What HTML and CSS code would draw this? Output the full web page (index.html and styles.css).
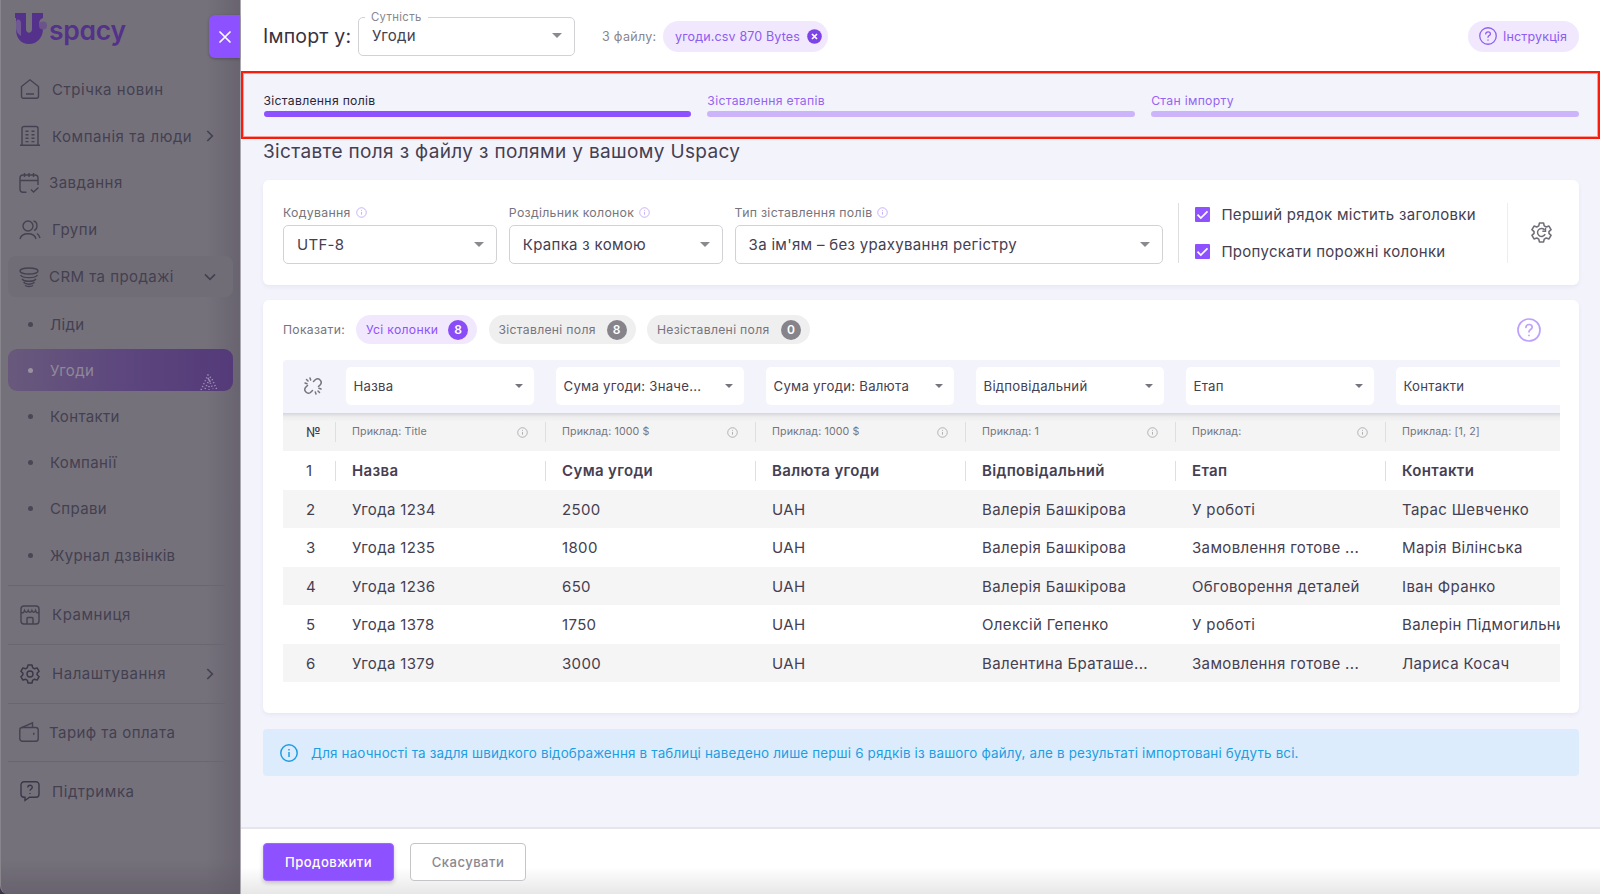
FILE: index.html
```html
<!DOCTYPE html>
<html lang="uk">
<head>
<meta charset="utf-8">
<title>Uspacy – Імпорт</title>
<link rel="stylesheet" href="styles.css">
</head>
<body>
<svg class="defs" width="0" height="0">
  <symbol id="info" viewBox="0 0 12 12"><circle cx="6" cy="6" r="5.2" fill="none" stroke="currentColor" stroke-width=".9"/><path d="M6 5.4v3M6 3.2v1" stroke="currentColor" stroke-width=".9"/></symbol>
  <symbol id="help" viewBox="0 0 24 24" fill="none" stroke="currentColor" stroke-width="1.7" stroke-linecap="round"><circle cx="12" cy="12" r="11"/><path d="M8.9 9.3c.2-1.8 1.5-2.8 3.2-2.8 1.800 0 3.100 1.100 3.100 2.700 0 2.300-3.200 2.200-3.200 4.600M12 17.300v.2"/></symbol>
  <symbol id="caret" viewBox="0 0 10 5"><path d="M0 0h10L5 5z" fill="currentColor"/></symbol>
  <symbol id="chev" viewBox="0 0 8 12" fill="none" stroke="currentColor" stroke-width="1.7"><path d="M1.300 1l5 5-5 5"/></symbol>
  <symbol id="gear" viewBox="0 0 20 20"><path d="M8 1h4l.6 2.700 1.900 1.100 2.600-.9 2 3.400-2 1.900v1.600l2 1.900-2 3.400-2.600-.9-1.900 1.100L12 19H8l-.6-2.700-1.900-1.100-2.600.9-2-3.400 2-1.900V9.200l-2-1.900 2-3.400 2.600.9 1.900-1.100z" fill="none" stroke="currentColor" stroke-width="1.500" stroke-linejoin="round"/></symbol>
</svg>
<div class="app">
  <aside class="sidebar">
    <div class="logo">
      <svg width="34" height="32" viewBox="0 0 34 32"><path d="M0 0h11v16c0 5 6 5 6 0V0h11v5a5.500 5.500 0 0 0 0 10.500C28 25 22 31 14 31S1 25 1 16V5H0z" fill="#54318a"/><path d="M1 10c0-5 5-4 5 0v13c-3-2-5-4-5-8z" fill="#6f5a91"/><circle cx="28" cy="12.500" r="4" fill="#6b548a"/></svg>
      <span class="logo-text">spacy</span>
    </div>
    <nav class="nav">
      <a class="item"><svg class="ico" viewBox="0 0 20 20"><path d="M1.500 7.500L10 .8l8.500 6.700v9.800a2 2 0 0 1-2 2h-13a2 2 0 0 1-2-2zM6 15h8"/></svg>Стрічка новин</a>
      <a class="item"><svg class="ico" viewBox="0 0 20 20"><path d="M0 19.200h20M2 19V2.500a2 2 0 0 1 2-2h12a2 2 0 0 1 2 2V19M5.500 5.300h3M11.500 5.300h3M5.500 8.800h3M11.500 8.800h3M5.500 12.300h3M11.500 12.300h3M5.500 15.600h3M11.500 15.600h3"/></svg>Компанія та люди<svg class="arrow"><use href="#chev"/></svg></a>
      <a class="item tight"><svg class="ico" viewBox="0 0 20 20"><path d="M7.500 19.200H4a3 3 0 0 1-3-3V5a3 3 0 0 1 3-3h12a3 3 0 0 1 3 3v7M1 7.500h18M5.500 0v4M10 0v4M14.500 0v4M12 16.500l2.500 2.500 5-4.500"/></svg>Завдання</a>
      <a class="item"><svg class="ico" viewBox="0 0 20 20"><circle cx="8" cy="6" r="5"/><path d="M0 19c1.500-7 14.500-7 16 0M13.500 1.300c4.500 0 4.500 8 .5 9M17 13.500c1.500 1 2.500 2.500 3 4.500"/></svg>Групи</a>
      <a class="item tight open"><svg class="ico" viewBox="0 0 20 20"><ellipse cx="10" cy="4" rx="9" ry="3"/><path d="M1.500 8c2 3.500 15 3.500 17 0M3 12c2 3 12 3 14 0M4.500 15.300c2 2.500 9 2.500 11 0M6 18.500c2 1.300 6 1.300 8 0"/></svg>CRM та продажі<svg class="arrow down"><use href="#chev"/></svg></a>
      <a class="sub">Ліди</a>
      <a class="sub active">Угоди<svg class="spark" width="20" height="17" viewBox="0 0 20 17"><path d="M2 16L9 1l4 4 5 11M6 15l4-9 4 9M10 12v4M9 4l3 5" fill="none" stroke="#a08cb8" stroke-width="1.500" stroke-dasharray="1.200 2"/></svg></a>
      <a class="sub">Контакти</a>
      <a class="sub">Компанії</a>
      <a class="sub">Справи</a>
      <a class="sub last">Журнал дзвінків</a>
      <a class="item ruled"><svg class="ico" viewBox="0 0 20 20"><rect x="1" y="1" width="18" height="18" rx="3"/><path d="M1 7.500c2 1 3 0 3.600-2 .8 2 2.700 2.500 3.600 0 .9 2.500 2.800 2.500 3.700 0 .9 2.500 2.700 2 3.600 0 .5 2 1.500 3 3.500 2M7 19v-5.500a1 1 0 0 1 1-1h4a1 1 0 0 1 1 1V19"/></svg>Крамниця</a>
      <a class="item ruled"><svg class="ico dark" viewBox="0 0 20 20"><use href="#gear"/><circle cx="10" cy="10" r="3"/></svg>Налаштування<svg class="arrow"><use href="#chev"/></svg></a>
      <a class="item tight ruled"><svg class="ico" viewBox="0 0 20 20"><rect x=".8" y="5.500" width="18.400" height="13.700" rx="2.500"/><path d="M3 5.500L13.500.8V5.500"/><path d="M14 11.800h1.500" stroke-width="2"/></svg>Тариф та оплата</a>
      <a class="item ruled"><svg class="ico dark" viewBox="0 0 20 20"><path d="M4 .8h12a3 3 0 0 1 3 3v9.500a3 3 0 0 1-3 3H9.500L5 19.500v-3.200H4a3 3 0 0 1-3-3V3.800a3 3 0 0 1 3-3zM7.800 6.500c0-3 4.500-3 4.500-.3 0 1.700-2.300 1.800-2.300 3.500M10 12v1"/></svg>Підтримка</a>
    </nav>
    <button class="close"><svg width="12" height="12" viewBox="0 0 12 12"><path d="M1 1l10 10M11 1L1 11" stroke="#fff" stroke-width="1.700" stroke-linecap="round"/></svg></button>
  </aside>

  <main class="panel">
    <header class="head">
      <h1>Імпорт у:</h1>
      <div class="select entity"><span class="legend">Сутність</span>Угоди<svg class="caret"><use href="#caret"/></svg></div>
      <span class="from">З файлу:</span>
      <span class="pill file">угоди.csv 870 Bytes<svg width="15" height="15" viewBox="0 0 15 15"><circle cx="7.500" cy="7.500" r="7.300" fill="#7d42e8"/><path d="M5 5l5 5M10 5l-5 5" stroke="#fff" stroke-width="1.700"/></svg></span>
      <span class="pill guide"><svg width="18" height="18"><use href="#help"/></svg>Інструкція</span>
    </header>

    <section class="steps">
      <div class="step current">Зіставлення полів</div>
      <div class="step">Зіставлення етапів</div>
      <div class="step">Стан імпорту</div>
    </section>
    <div class="highlight"></div>

    <section class="body">
      <h2>Зіставте поля з файлу з полями у вашому Uspacy</h2>
      <div class="card settings">
        <div class="field"><label>Кодування<svg class="i"><use href="#info"/></svg></label><div class="select">UTF-8<svg class="caret"><use href="#caret"/></svg></div></div>
        <div class="field"><label>Роздільник колонок<svg class="i"><use href="#info"/></svg></label><div class="select">Крапка з комою<svg class="caret"><use href="#caret"/></svg></div></div>
        <div class="field"><label>Тип зіставлення полів<svg class="i"><use href="#info"/></svg></label><div class="select">За ім'ям – без урахування регістру<svg class="caret"><use href="#caret"/></svg></div></div>
        <div class="checks">
          <div class="check"><svg width="15" height="15" viewBox="0 0 15 15"><rect width="15" height="15" rx="1" fill="#8e51ff"/><path d="M2.500 7.700l3.300 3.300 6.700-6.700" fill="none" stroke="#fff" stroke-width="1.700"/></svg>Перший рядок містить заголовки</div>
          <div class="check"><svg width="15" height="15" viewBox="0 0 15 15"><rect width="15" height="15" rx="1" fill="#8e51ff"/><path d="M2.500 7.700l3.300 3.300 6.700-6.700" fill="none" stroke="#fff" stroke-width="1.700"/></svg>Пропускати порожні колонки</div>
        </div>
        <svg class="reset" width="21" height="21" viewBox="0 0 20 20"><use href="#gear"/><path d="M13.500 11.500a3.800 3.800 0 1 1-.7-4.200M13.800 5.800v3h-3" fill="none" stroke="currentColor" stroke-width="1.400"/></svg>
      </div>

      <div class="card data">
        <div class="filters">
          <span class="show">Показати:</span>
          <span class="chip on">Усі колонки<b>8</b></span>
          <span class="chip">Зіставлені поля<b>8</b></span>
          <span class="chip">Незіставлені поля<b>0</b></span>
          <svg class="q" width="24" height="24"><use href="#help"/></svg>
        </div>
        <div class="table">
          <div class="row map">
            <div class="unlink"><svg width="18" height="18" viewBox="0 0 18 18" fill="none" stroke="#77747c" stroke-width="1.500" stroke-linecap="round"><path d="M9.500 4.500l2-2a3.600 3.600 0 0 1 5 5l-2 2M8.500 13.500l-2 2a3.600 3.600 0 0 1-5-5l2-2M6 1l.7 2M1 6l2 .7M2.500 2.500L4 4M12 17l-.7-2M17 12l-2-.7M15.500 15.500L14 14"/></svg></div>
            <div class="col"><div class="pick">Назва<svg class="c2"><use href="#caret"/></svg></div></div>
            <div class="col"><div class="pick">Сума угоди: Значе...<svg class="c2"><use href="#caret"/></svg></div></div>
            <div class="col"><div class="pick">Сума угоди: Валюта<svg class="c2"><use href="#caret"/></svg></div></div>
            <div class="col"><div class="pick">Відповідальний<svg class="c2"><use href="#caret"/></svg></div></div>
            <div class="col"><div class="pick">Етап<svg class="c2"><use href="#caret"/></svg></div></div>
            <div class="col"><div class="pick">Контакти</div></div>
          </div>
          <div class="row sample"><span class="n">№</span><span>Приклад: Title<svg class="i"><use href="#info"/></svg></span><span>Приклад: 1000 $<svg class="i"><use href="#info"/></svg></span><span>Приклад: 1000 $<svg class="i"><use href="#info"/></svg></span><span>Приклад: 1<svg class="i"><use href="#info"/></svg></span><span>Приклад:<svg class="i"><use href="#info"/></svg></span><span>Приклад: [1, 2]</span></div>
          <div class="row title"><span class="n">1</span><span>Назва</span><span>Сума угоди</span><span>Валюта угоди</span><span>Відповідальний</span><span>Етап</span><span>Контакти</span></div>
          <div class="row alt"><span class="n">2</span><span>Угода 1234</span><span>2500</span><span>UAH</span><span>Валерія Башкірова</span><span>У роботі</span><span>Тарас Шевченко</span></div>
          <div class="row"><span class="n">3</span><span>Угода 1235</span><span>1800</span><span>UAH</span><span>Валерія Башкірова</span><span>Замовлення готове ...</span><span>Марія Вілінська</span></div>
          <div class="row alt"><span class="n">4</span><span>Угода 1236</span><span>650</span><span>UAH</span><span>Валерія Башкірова</span><span>Обговорення деталей</span><span>Іван Франко</span></div>
          <div class="row"><span class="n">5</span><span>Угода 1378</span><span>1750</span><span>UAH</span><span>Олексій Гепенко</span><span>У роботі</span><span>Валерін Підмогильни</span></div>
          <div class="row alt"><span class="n">6</span><span>Угода 1379</span><span>3000</span><span>UAH</span><span>Валентина Браташе...</span><span>Замовлення готове ...</span><span>Лариса Косач</span></div>
        </div>
      </div>

      <div class="alert"><svg width="18" height="18" viewBox="0 0 18 18" fill="none" stroke="currentColor" stroke-width="1.500"><circle cx="9" cy="9" r="8.200"/><path d="M9 8v5M9 5v1.500"/></svg>Для наочності та задля швидкого відображення в таблиці наведено лише перші 6 рядків із вашого файлу, але в результаті імпортовані будуть всі.</div>
    </section>

    <footer class="foot">
      <button class="btn primary">Продовжити</button>
      <button class="btn">Скасувати</button>
    </footer>
  </main>
</div>
</body>
</html>
```
FILE: styles.css
```css
* { box-sizing: border-box; }
body { margin: 0; font-family: Inter, "Liberation Sans", sans-serif; font-size: 15px; letter-spacing: .3px; color: #454051; }
.defs { position: absolute; }
.app { display: flex; width: 1600px; height: 894px; overflow: hidden; background: #3c3448; }
svg { flex: none; }

.sidebar { position: relative; width: 241px; height: 894px; flex: none; padding-top: 12px; border-left: 1px solid #88858c; border-right: 1px solid #aaa7ae; border-bottom-left-radius: 8px; background: linear-gradient(90deg, rgba(95, 90, 102, 0) 205px, rgba(95, 90, 102, .6) 240px), linear-gradient(#75717b 860px, #67626d); color: #434050; }
.logo { display: flex; height: 54px; padding-left: 14px; color: #54318a; }
.logo svg { margin-top: 1px; }
.logo-text { margin: 1.500px 0 0 0; font-size: 26.500px; font-weight: 600; line-height: 32px; letter-spacing: -.3px; font-feature-settings: "cv11"; }
.nav { display: flex; flex-direction: column; padding: 0 7px; }
.item { display: flex; align-items: center; height: 46.8px; padding: 0 10px 0 12px; letter-spacing: .55px; white-space: nowrap; }
.item .ico { width: 20px; height: 20px; margin-right: 12px; overflow: visible; fill: none; stroke: #464150; stroke-width: 1.4; color: #3c3747; }
.item .ico.dark { stroke: #3c3747; }
.item.tight { padding-left: 11px; letter-spacing: .45px; }
.item.tight .ico { margin-right: 10px; }
.arrow { width: 8px; height: 12px; margin-left: auto; margin-right: 9px; }
.arrow.down { transform: rotate(90deg); }
.open { width: 225px; height: 41px; margin: 3px 0; border-radius: 8px; background: #716d77; }
.sub { position: relative; display: flex; align-items: center; height: 42px; margin: 0 0 4.200px; letter-spacing: .35px; border-radius: 9px; }
.sub:nth-child(6) { margin-top: 3px; }
.sub.last { margin-bottom: 9px; }
.sub::before { content: ""; width: 5px; height: 5px; margin: 0 17px 0 20px; border-radius: 50%; background: #4b4655; }
.sub.active { width: 225px; color: #8e8998; background: linear-gradient(90deg, #68597c, #5d477e 50%, #543a79); }
.sub.active::before { background: #98929f; }
.spark { position: absolute; right: 14px; bottom: 0; }
.item.ruled { height: 58.700px; width: 217px; margin: 0; border-top: 1px solid #6a6671; padding-right: 0; }
.item.ruled .arrow { margin-right: 11px; }
.close { position: absolute; top: 15px; right: 0; display: flex; align-items: center; justify-content: center; width: 31px; height: 43px; padding: 0; border: 0; border-radius: 6px 0 0 6px; background: #8e51ff; box-shadow: 0 1px 3px rgba(0, 0, 0, .25); }

.panel { position: relative; display: flex; flex-direction: column; width: 1359px; background: #f3f3fc; }
.head { display: flex; align-items: center; height: 73px; flex: none; padding: 0 21px 0 22px; background: #fff; border-bottom: 1px solid #dcdce0; }
h1 { width: 95px; margin: 0; font-size: 19.500px; font-weight: 400; letter-spacing: .2px; color: #37323f; white-space: nowrap; }
.select { position: relative; display: flex; align-items: center; justify-content: space-between; height: 39px; padding: 0 12px 1px 13px; border: 1px solid #d2d1d5; border-radius: 5px; background: #fff; }
.caret { width: 10px; height: 5px; color: #8b8990; }
.entity { width: 217px; }
.legend { position: absolute; top: -9px; left: 6px; padding: 0 6px; background: #fff; font-size: 11.300px; line-height: 16px; color: #88858e; letter-spacing: .35px; }
.from { margin-left: 27px; width: 61px; font-size: 12.500px; white-space: nowrap; color: #88858e; }
.pill { display: flex; align-items: center; height: 31px; border-radius: 16px; background: #f1e8fe; color: #8d5cf0; font-size: 12.500px; letter-spacing: .15px; white-space: nowrap; }
.file { width: 165px; justify-content: space-between; padding: 0 6px 0 12px; }
.guide { width: 111px; gap: 6px; margin-left: auto; padding-left: 11px; }

.steps { display: grid; grid-template-columns: repeat(3, 1fr); gap: 16px; height: 66px; flex: none; padding: 18px 21px 0 22.500px; }
.step { height: 26px; font-size: 12.200px; line-height: 19px; color: #9564f2; }
.step::after { content: ""; display: block; height: 6px; margin-top: 1px; border-radius: 3px; background: #ccb4fb; }
.step.current { color: #2c2735; }
.step.current::after { background: #8e51ff; }
.highlight { position: absolute; top: 71px; left: 0; width: 1359px; height: 68px; border: 2px solid #fb1b0b; box-shadow: inset 0 0 0 1px rgba(251, 60, 40, .45); }

.body { flex: 1; padding: 0 21px 0 22px; }
h2 { height: 41px; margin: 0; font-size: 19px; font-weight: 400; line-height: 25px; letter-spacing: .35px; }
.card { background: #fff; border-radius: 6px; box-shadow: 0 2px 4px rgba(90, 80, 140, .07); }
.settings { display: flex; height: 105px; padding: 23px 0 0 20px; gap: 11.800px; }
.field { width: 214px; }
.field:nth-child(3) { width: 428.500px; }
.field label { display: flex; align-items: center; gap: 5px; height: 18px; margin-bottom: 4px; font-size: 12.300px; color: #77747e; }
.i { width: 11px; height: 11px; color: #bea4fa; }
.checks { display: flex; flex-direction: column; gap: 13px; width: 330px; height: 60px; margin-left: 3.500px; padding-left: 16px; border-left: 1px solid #dedde1; border-right: 1px solid #eeedf1; }
.check { display: flex; align-items: center; gap: 11px; height: 23.500px; white-space: nowrap; }
.reset { margin: 19px 0 0 11px; color: #716e77; }

.data { height: 413px; margin-top: 15px; padding: 15.400px 20px 0; }
.filters { display: flex; align-items: center; height: 29px; font-size: 12.200px; color: #77747e; white-space: nowrap; }
.show { width: 73px; }
.chip { display: flex; align-items: center; justify-content: space-between; width: 147px; height: 29px; margin-right: 11.500px; padding: 0 9px 0 10px; border-radius: 15px; background: #efeff0; }
.chip:nth-child(4) { width: 163px; }
.chip b { display: grid; place-items: center; width: 20px; height: 20px; border-radius: 50%; background: #86838b; color: #fff; font-size: 12px; font-weight: 600; letter-spacing: 0; }
.chip.on { width: 121px; background: #f1e8fe; color: #8e51ff; }
.chip.on b { background: #8a4cf7; }
.q { margin-left: auto; margin-right: 18px; color: #bea1fc; }

.table { margin-top: 15.600px; width: 1276.500px; overflow: hidden; border-radius: 4px 0 0 0; }
.row { display: grid; grid-template-columns: 52px repeat(6, 210px); align-items: center; height: 38.500px; }
.row > span { position: relative; padding-left: 17px; white-space: nowrap; letter-spacing: .35px; }
.row > .n { padding-left: 23px; }
.alt { background: #f5f5f5; }
.map { height: 53px; background: #f3f3fc; }
.unlink { padding-left: 21px; height: 18px; }
.col { padding: 0 0 1px 11px; }
.pick { display: flex; align-items: center; justify-content: space-between; width: 188px; height: 38px; padding: 0 11px 0 7.500px; border-radius: 5px; background: #fff; font-size: 13.200px; letter-spacing: .25px; white-space: nowrap; }
.c2 { width: 8px; height: 4px; color: #77747e; }
.sample { background: linear-gradient(#d6d5da, #eeeeef 4px, #f4f4f4 9px); }
.sample > span { display: flex; align-items: center; justify-content: space-between; padding-right: 17px; height: 20px; font-size: 10.700px; color: #77747e; letter-spacing: .1px; }
.sample .i { color: #a5a3a9; }
.sample > .n { font-size: 13.500px; color: #3f3a4b; }
.sample > span + span, .title > span + span { padding-left: 16px; border-left: 1px solid #dfdee1; height: 20px; line-height: 20px; }
.title > span + span { font-weight: 600; }

.alert { display: flex; align-items: center; height: 47px; margin-top: 16px; padding-left: 17px; gap: 13px; border-radius: 4px; background: #dcecfc; color: #1d9ee3; font-size: 13.400px; white-space: nowrap; letter-spacing: .17px; }
.foot { display: flex; gap: 16px; height: 67px; flex: none; padding: 14px 22px 0; border-top: 2px solid #e6e5ea; background: linear-gradient(#fff 38px, #e7e7e7); }
.btn { width: 116px; height: 38px; padding: 0; border: 1px solid #c5c4c8; border-radius: 4px; background: #fff; color: #8b8891; font: 500 13.100px Inter, sans-serif; letter-spacing: .45px; }
.primary { width: 131px; border-color: #9c68ff; background: #8e51ff; color: #fff; box-shadow: 0 2px 4px rgba(0, 0, 0, .2); }
```
